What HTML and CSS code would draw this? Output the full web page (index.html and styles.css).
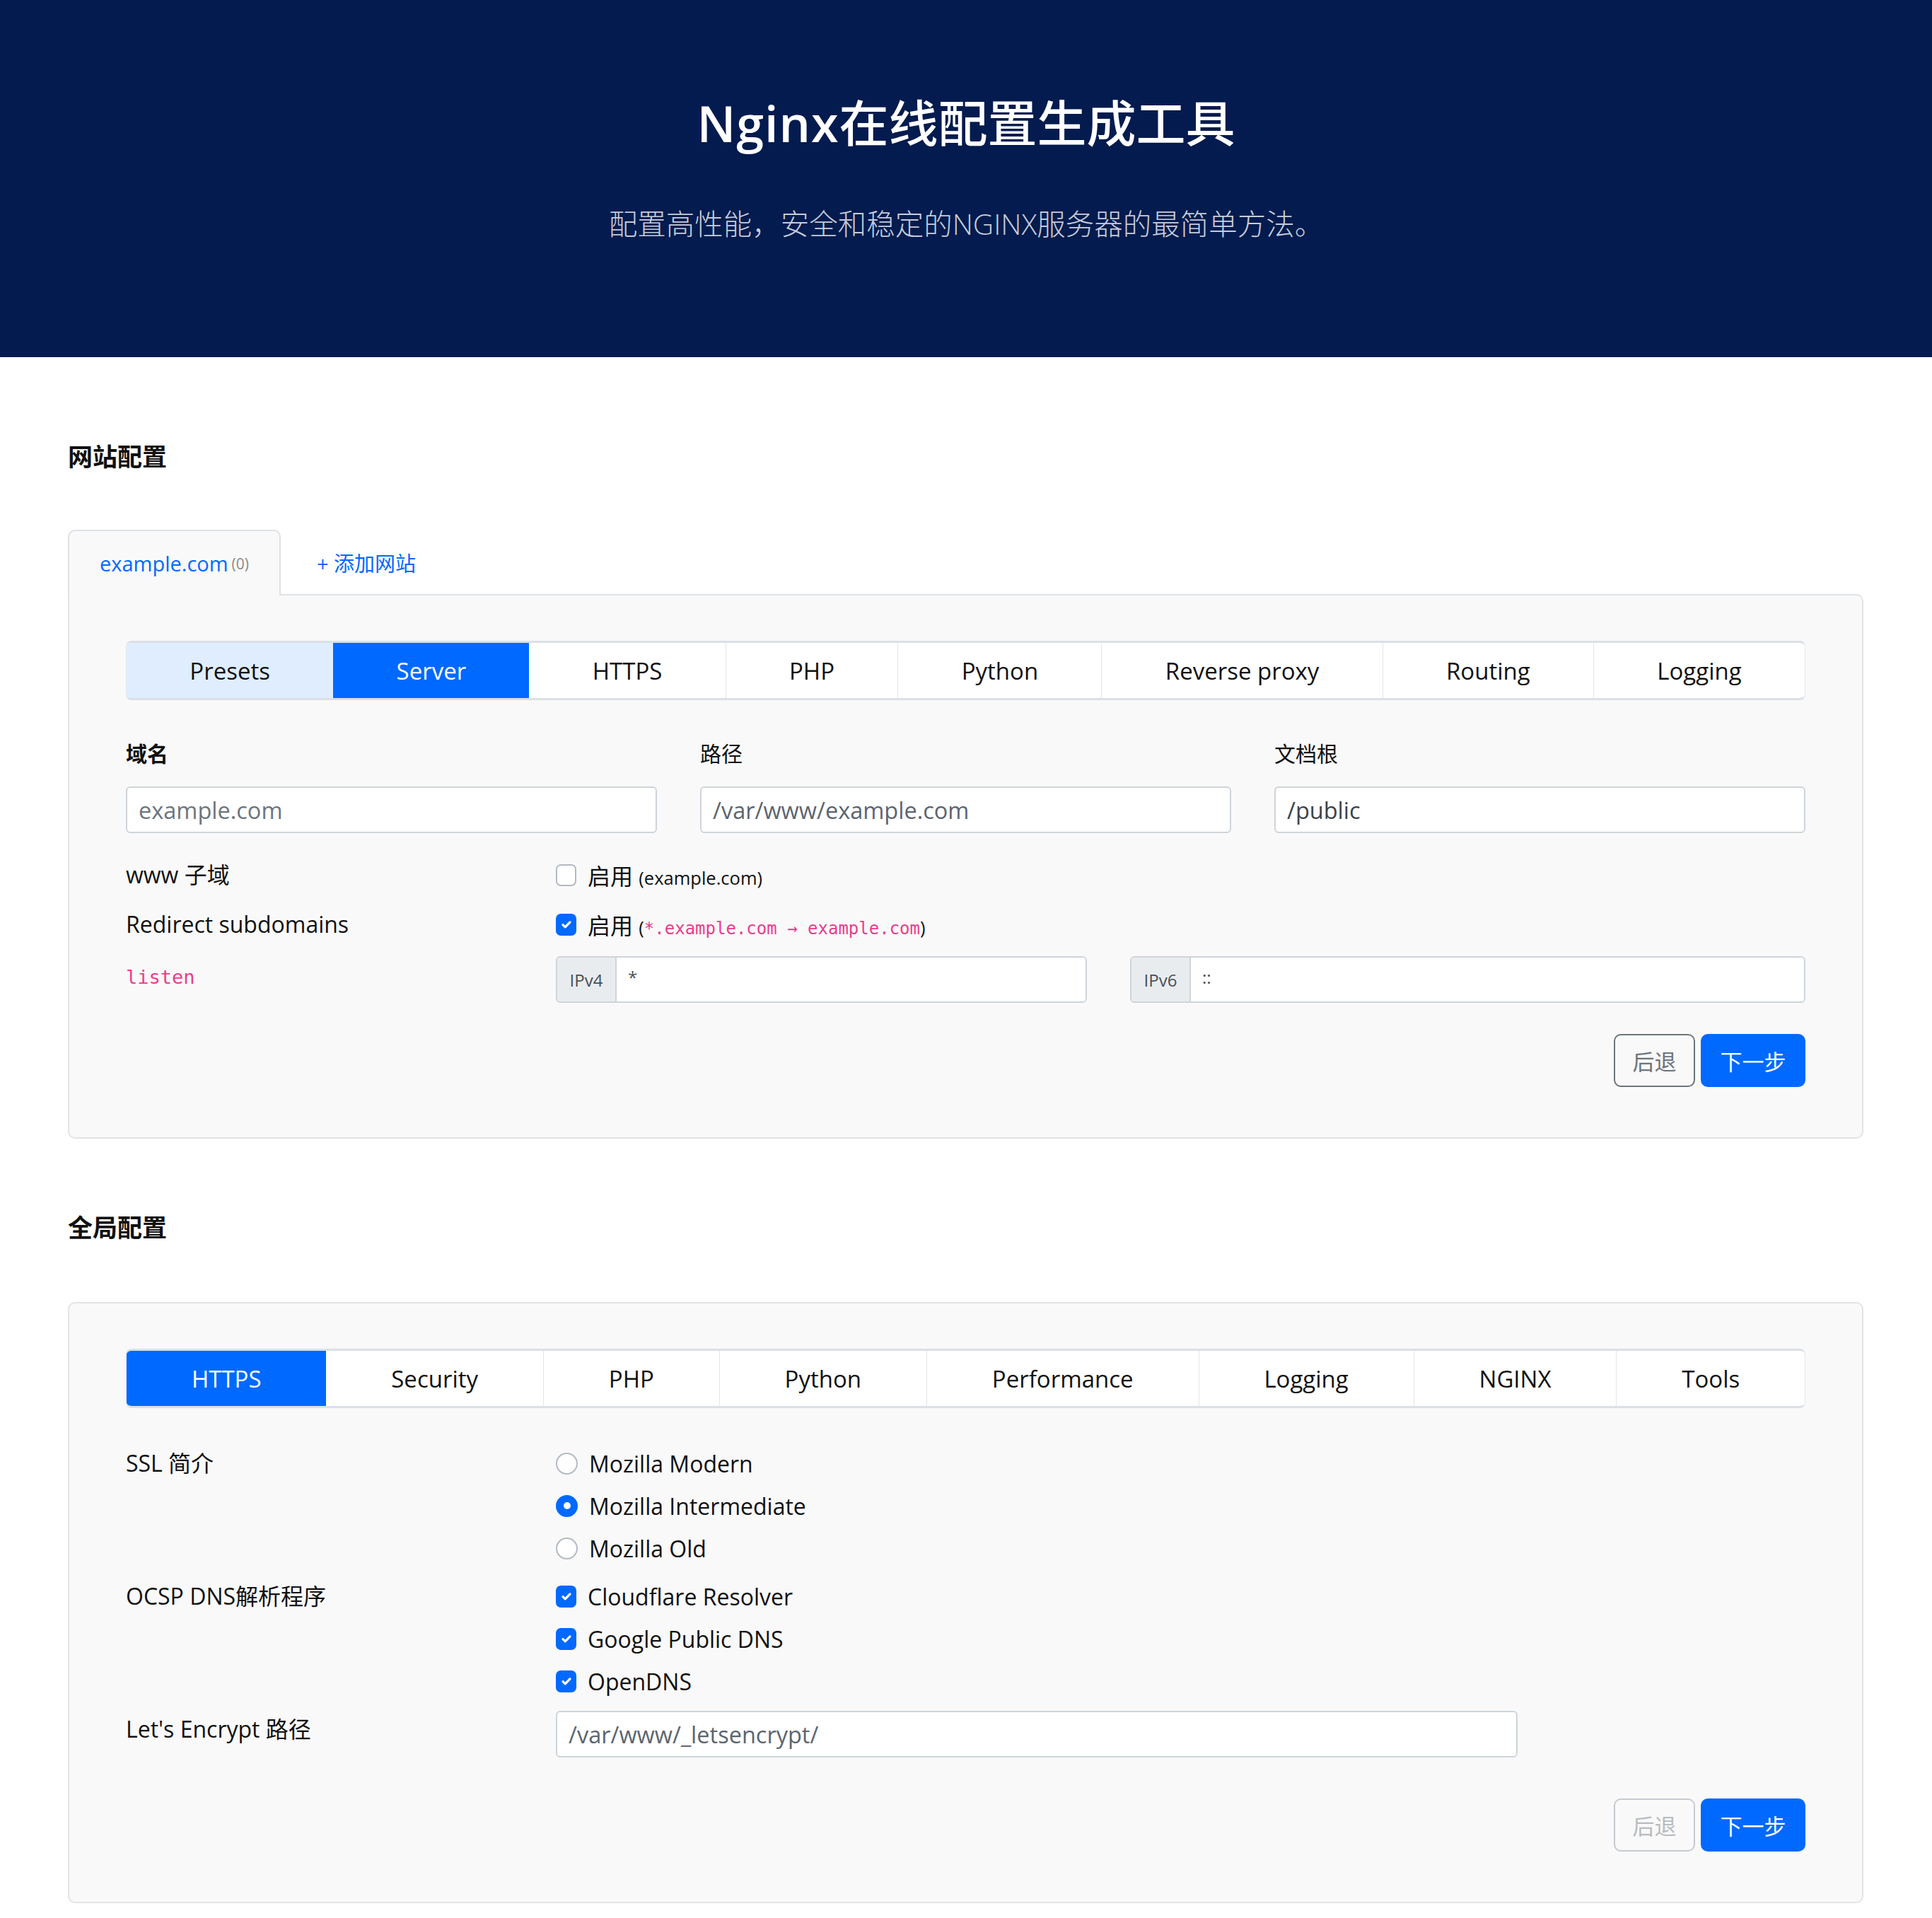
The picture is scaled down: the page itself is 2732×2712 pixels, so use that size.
FILE: index.html
```html
<!DOCTYPE html>
<html lang="zh-CN">
<head>
    <meta charset="UTF-8">
    <meta name="viewport" content="width=device-width, initial-scale=1.0">
    <title>Nginx在线配置生成工具</title>
    <link rel="stylesheet" href="styles.css">
</head>
<body>
    <header class="hero">
        <h1 class="hero-title"><span class="hero-latin">Nginx</span>在线配置生成工具</h1>
        <p class="hero-sub">配置高性能，安全和稳定的NGINX服务器的最简单方法。</p>
    </header>

    <main class="page">
        <!-- 网站配置 -->
        <h2 class="section-title">网站配置</h2>
        <div class="site-tabs">
            <div class="site-tab active">example.com <small>(0)</small></div>
            <div class="site-tab add">+ 添加网站</div>
        </div>
        <section class="panel panel-attached">
            <nav class="tabbar">
                <span class="tab done">Presets</span>
                <span class="tab current">Server</span>
                <span class="tab">HTTPS</span>
                <span class="tab">PHP</span>
                <span class="tab">Python</span>
                <span class="tab">Reverse proxy</span>
                <span class="tab">Routing</span>
                <span class="tab">Logging</span>
            </nav>

            <div class="fields">
                <div class="field">
                    <label class="field-label strong">域名</label>
                    <input class="text-input" type="text" placeholder="example.com">
                </div>
                <div class="field">
                    <label class="field-label">路径</label>
                    <input class="text-input" type="text" value="/var/www/example.com">
                </div>
                <div class="field">
                    <label class="field-label">文档根</label>
                    <input class="text-input dark" type="text" value="/public">
                </div>
            </div>

            <div class="row row-first">
                <div class="row-label">www 子域</div>
                <div class="row-body">
                    <div class="option">
                        <span class="box"></span>
                        <span>启用 <small class="note">(example.com)</small></span>
                    </div>
                </div>
            </div>
            <div class="row">
                <div class="row-label">Redirect subdomains</div>
                <div class="row-body">
                    <div class="option">
                        <span class="box on"><svg viewBox="0 0 16 16"><path d="M4 8.5l2.6 2.6L12 5.5"/></svg></span>
                        <span>启用 <small class="note">(<code>*.example.com → example.com</code>)</small></span>
                    </div>
                </div>
            </div>
            <div class="row row-listen">
                <div class="row-label listen-label"><code class="code-label">listen</code></div>
                <div class="row-body groups">
                    <div class="input-group ipv4">
                        <span class="addon">IPv4</span>
                        <input class="group-input" type="text" value="*">
                    </div>
                    <div class="input-group ipv6">
                        <span class="addon">IPv6</span>
                        <input class="group-input" type="text" value="::">
                    </div>
                </div>
            </div>

            <div class="actions">
                <button class="btn btn-outline">后退</button>
                <button class="btn btn-primary">下一步</button>
            </div>
        </section>

        <!-- 全局配置 -->
        <h2 class="section-title second">全局配置</h2>
        <section class="panel">
            <nav class="tabbar">
                <span class="tab current">HTTPS</span>
                <span class="tab">Security</span>
                <span class="tab">PHP</span>
                <span class="tab">Python</span>
                <span class="tab">Performance</span>
                <span class="tab">Logging</span>
                <span class="tab">NGINX</span>
                <span class="tab">Tools</span>
            </nav>

            <div class="row row-ssl">
                <div class="row-label">SSL 简介</div>
                <div class="row-body">
                    <div class="option"><span class="radio"></span><span>Mozilla Modern</span></div>
                    <div class="option"><span class="radio on"></span><span>Mozilla Intermediate</span></div>
                    <div class="option"><span class="radio"></span><span>Mozilla Old</span></div>
                </div>
            </div>
            <div class="row row-ocsp">
                <div class="row-label">OCSP DNS解析程序</div>
                <div class="row-body">
                    <div class="option"><span class="box on"><svg viewBox="0 0 16 16"><path d="M4 8.5l2.6 2.6L12 5.5"/></svg></span><span>Cloudflare Resolver</span></div>
                    <div class="option"><span class="box on"><svg viewBox="0 0 16 16"><path d="M4 8.5l2.6 2.6L12 5.5"/></svg></span><span>Google Public DNS</span></div>
                    <div class="option"><span class="box on"><svg viewBox="0 0 16 16"><path d="M4 8.5l2.6 2.6L12 5.5"/></svg></span><span>OpenDNS</span></div>
                </div>
            </div>
            <div class="row row-le">
                <div class="row-label le-label">Let's Encrypt 路径</div>
                <div class="row-body">
                    <input class="text-input le-input" type="text" value="/var/www/_letsencrypt/">
                </div>
            </div>

            <div class="actions actions-second">
                <button class="btn btn-outline disabled">后退</button>
                <button class="btn btn-primary">下一步</button>
            </div>
        </section>
    </main>
</body>
</html>
```

FILE: styles.css
```css
/* cores base */
:root {
    --navy: #031b4e;
    --blue: #0069ff;
    --blue-light: #dfedff;
    --pink: #e83e8c;
    --panel-bg: #f9f9f9;
    --line: #dee2e6;
    --sans: "Open Sans", "Noto Sans CJK SC", sans-serif;
    --mono: "DejaVu Sans Mono", "Liberation Mono", monospace;
}

* {
    margin: 0;
    padding: 0;
    box-sizing: border-box;
}

body {
    font-family: var(--sans);
    font-size: 28px;
    color: #111;
    background: #fff;
}

/* topo */
.hero {
    height: 505px;
    background: var(--navy);
    color: #fff;
    text-align: center;
    padding-top: 132px;
}

.hero-title {
    font-size: 70px;
    font-weight: 500;
    line-height: 84px;
}

.hero-latin {
    font-weight: 600;
    letter-spacing: 1px;
}

.hero-sub {
    margin-top: 72px;
    font-size: 40.5px;
    font-weight: 300;
    line-height: 58px;
    color: #c5ccda;
}

.page {
    margin: 0 97px 0 96px;
    padding-bottom: 20px;
}

.section-title {
    margin-top: 120px;
    font-size: 35px;
    font-weight: 700;
    line-height: 42px;
}

.section-title.second {
    margin-top: 105px;
    margin-bottom: 84px;
}

/* abas de sites */
.site-tabs {
    display: flex;
    margin-top: 82px;
    height: 91px;
}

.site-tab {
    display: flex;
    align-items: center;
    color: var(--blue);
    font-size: 29px;
}

.site-tab.active {
    width: 301px;
    justify-content: center;
    background: var(--panel-bg);
    border: 2px solid var(--line);
    border-bottom: none;
    border-radius: 10px 10px 0 0;
    position: relative;
    z-index: 1;
    margin-bottom: -2px;
    height: 93px;
}

.site-tab.active small {
    font-size: 21px;
    color: #8a8a8a;
    margin-left: 5px;
}

.site-tab.add {
    padding-left: 51px;
}

/* painel */
.panel {
    background: var(--panel-bg);
    border: 2px solid #e4e4e4;
    border-radius: 10px;
    padding: 64px 80px 71px;
}

.panel-attached {
    border-top-left-radius: 0;
    border-top-color: var(--line);
}

.tabbar {
    display: flex;
    height: 84px;
    background: #fff;
    border: 1px solid #e3e5ea;
    border-top-width: 3px;
    border-bottom-width: 3px;
    border-color: #dcdfe6;
    border-left-color: #e6e8ec;
    border-right-color: #e6e8ec;
    border-radius: 8px;
    overflow: hidden;
}

.tab {
    flex: 1 1 auto;
    display: flex;
    align-items: center;
    justify-content: center;
    padding: 0 20px;
    font-size: 33px;
    color: #111;
    border-left: 1px solid #e3e5ea;
}

.tab:first-child {
    border-left: none;
}

.tab.done {
    background: var(--blue-light);
}

.tab.current {
    background: var(--blue);
    color: #fff;
    border-left: none;
}

.tab.current + .tab {
    border-left: none;
}

/* campos principais */
.fields {
    display: grid;
    grid-template-columns: repeat(3, 1fr);
    gap: 61px;
    margin-top: 55px;
}

.field-label {
    display: block;
    line-height: 42px;
    margin-bottom: 25px;
    font-size: 30px;
}

.field-label.strong {
    font-weight: 700;
}

.text-input {
    display: block;
    width: 100%;
    height: 66px;
    padding: 0 16px;
    border: 2px solid #ced4da;
    border-radius: 6px;
    background: #fff;
    font-family: var(--sans);
    font-size: 32.5px;
    color: #5b6570;
    outline: none;
}

.text-input::placeholder {
    color: #6c757d;
}

.text-input.dark {
    color: #3c434a;
}

/* linhas label / controle */
.row {
    display: flex;
    margin-top: 28px;
}

.row-first {
    margin-top: 38px;
}

.row-label {
    width: 608px;
    flex: none;
    line-height: 42px;
    font-size: 32px;
}

.row-body {
    flex: 1;
    display: flex;
    flex-direction: column;
}

.option {
    display: flex;
    align-items: center;
    height: 42px;
    font-size: 32px;
}

.row-ssl .option,
.row-ocsp .option {
    margin-bottom: 18px;
}

.row-ssl {
    margin-top: 57px;
}

.row-ocsp {
    margin-top: 8px;
}

.row-le {
    margin-top: 3px;
}

.le-label {
    padding-top: 5px;
}

.le-input {
    width: 1360px;
}

.note {
    font-size: 25.5px;
}

code {
    font-family: var(--mono);
    font-size: 24px;
    color: var(--pink);
}

.code-label {
    font-size: 27px;
}

.listen-label {
    padding-bottom: 10px;
}

/* checkbox e radio desenhados */
.box,
.radio {
    width: 29px;
    height: 31px;
    flex: none;
    margin-right: 16px;
    border: 2px solid #b3bac3;
    background: #fff;
    display: flex;
    align-items: center;
    justify-content: center;
}

.box {
    border-radius: 7px;
}

.radio {
    width: 31px;
    border-radius: 50%;
}

.box.on {
    background: var(--blue);
    border-color: var(--blue);
}

.box svg {
    width: 20px;
    height: 20px;
    fill: none;
    stroke: #fff;
    stroke-width: 2.6;
    stroke-linecap: round;
    stroke-linejoin: round;
}

.radio.on {
    background: var(--blue);
    border-color: var(--blue);
}

.radio.on::after {
    content: "";
    width: 10px;
    height: 10px;
    border-radius: 50%;
    background: #fff;
}

/* listen */
.row-listen {
    margin-top: 24px;
    align-items: center;
}

.groups {
    flex-direction: row;
    gap: 61px;
}

.input-group {
    display: flex;
    height: 66px;
    border: 2px solid #ced4da;
    border-radius: 6px;
    overflow: hidden;
    background: #fff;
}

.ipv4 {
    width: 751px;
}

.ipv6 {
    flex: 1;
}

.addon {
    width: 84px;
    display: flex;
    align-items: center;
    justify-content: center;
    background: #e9ecef;
    border-right: 2px solid #ced4da;
    font-size: 24px;
    color: #495057;
}

.group-input {
    flex: 1;
    border: none;
    outline: none;
    padding: 0 16px 8px;
    font-family: var(--sans);
    font-size: 24px;
    color: #495057;
    background: #fff;
}

/* botoes */
.actions {
    display: flex;
    justify-content: flex-end;
    gap: 8px;
    margin-top: 44px;
}

.actions-second {
    margin-top: 58px;
}

.btn {
    height: 75px;
    padding: 0 24px;
    border-radius: 10px;
    font-family: var(--sans);
    font-size: 31px;
    cursor: pointer;
}

.btn-outline {
    width: 115px;
    background: transparent;
    border: 2px solid #6c757d;
    color: #6c757d;
}

.btn-outline.disabled {
    border-color: #c6cbd0;
    color: #b8bcc1;
}

.btn-primary {
    width: 148px;
    background: var(--blue);
    border: 2px solid var(--blue);
    color: #fff;
}
```
